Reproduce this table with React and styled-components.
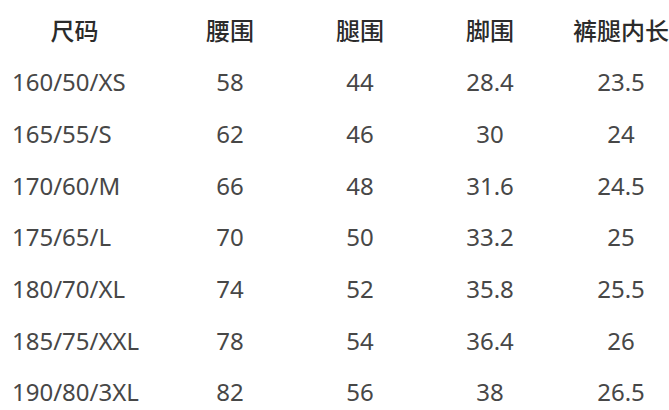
import React from 'react'
import styled, { createGlobalStyle } from 'styled-components'

const GlobalStyle = createGlobalStyle`
    html, body {
        margin: 0;
        padding: 0;
        background: #fff;
        overflow: hidden;
    }

    body {
        font-family: "Noto Sans", "Noto Sans CJK SC", sans-serif;
    }
`

const Table = styled.div`
    display: grid;
    grid-template-columns: 153px 130px 130px 130px 132px;
    grid-auto-rows: 51.67px;
    padding: 5px 0 0 12px;
    width: max-content;
`

const Cell = styled.div`
    display: flex;
    align-items: center;
    justify-content: ${props => (props.left ? 'flex-start' : 'center')};
    padding-right: ${props => (props.first ? '28px' : '0')};
    font-size: 24px;
    line-height: 1;
    white-space: nowrap;
    font-weight: ${props => (props.head ? 500 : 400)};
    color: ${props => (props.head ? '#2b2b2b' : '#474747')};
`

const headers = ['尺码', '腰围', '腿围', '脚围', '裤腿内长']

const rows = [
    ['160/50/XS', '58', '44', '28.4', '23.5'],
    ['165/55/S', '62', '46', '30', '24'],
    ['170/60/M', '66', '48', '31.6', '24.5'],
    ['175/65/L', '70', '50', '33.2', '25'],
    ['180/70/XL', '74', '52', '35.8', '25.5'],
    ['185/75/XXL', '78', '54', '36.4', '26'],
    ['190/80/3XL', '82', '56', '38', '26.5'],
]

const App = () => {
    return (
        <>
            <GlobalStyle />
            <Table>
                {headers.map((h, i) => (
                    <Cell key={h} head first={i === 0}>{h}</Cell>
                ))}
                {rows.map(row =>
                    row.map((value, i) => (
                        <Cell key={row[0] + i} left={i === 0}>{value}</Cell>
                    ))
                )}
            </Table>
        </>
    )
}

export default App
